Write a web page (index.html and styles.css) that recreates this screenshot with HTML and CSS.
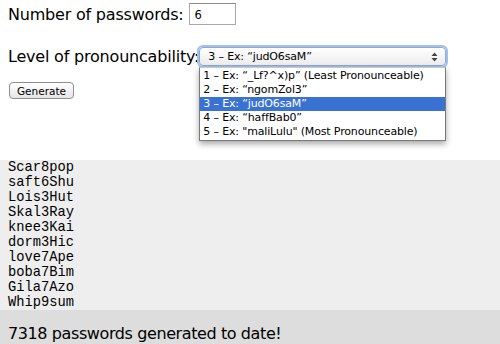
FILE: index.html
```html
<!DOCTYPE html>
<html>
<head>
<meta charset="utf-8">
<link rel="stylesheet" href="styles.css">
</head>
<body>
<div class="form">
  <div class="row r1">
    <span class="label">Number of passwords:</span>
    <span class="input">6</span>
  </div>
  <div class="row r2">
    <span class="label">Level of pronouncability:</span>
    <div class="select">
      <span class="sel-text">3 – Ex: “judO6saM”</span>
      <svg class="arrows" width="7" height="10" viewBox="0 0 7 10"><path d="M3.5 0.5 L6.5 4 H0.5 Z M3.5 9.5 L6.5 6 H0.5 Z" fill="#444"/></svg>
      <ul class="menu">
        <li>1 – Ex: “_Lf?^x)p” (Least Pronounceable)</li>
        <li>2 – Ex: “ngomZol3”</li>
        <li class="on">3 – Ex: “judO6saM”</li>
        <li>4 – Ex: “haffBab0”</li>
        <li>5 – Ex: "maliLulu" (Most Pronounceable)</li>
      </ul>
    </div>
  </div>
  <div class="row r3">
    <span class="btn">Generate</span>
  </div>
</div>
<pre class="list">Scar8pop
saft6Shu
Lois3Hut
Skal3Ray
knee3Kai
dorm3Hic
love7Ape
boba7Bim
Gila7Azo
Whip9sum</pre>
<div class="footer">7318 passwords generated to date!</div>
</body>
</html>
```
FILE: styles.css
```css
html, body {
  margin: 0;
  padding: 0;
  background: #ffffff;
}
body {
  font-family: "DejaVu Sans", "Liberation Sans", sans-serif;
  color: #000;
  width: 500px;
  height: 344px;
  overflow: hidden;
}
.form {
  padding: 3px 8px 0 8px;
}
.row {
  display: flex;
  align-items: center;
}
.label {
  font-size: 16px;
  letter-spacing: -0.2px;
}
.r1 {
  height: 22px;
}
.r1 .label {
  margin-right: 5px;
}
.input {
  box-sizing: border-box;
  width: 47px;
  height: 22px;
  border: 1px solid #a9a9a9;
  border-top-color: #8a8a8a;
  font-size: 11.5px;
  padding: 4px 0 0 5px;
  line-height: 14px;
}
.r2 {
  margin-top: 22px;
  height: 19px;
}
.select {
  position: relative;
  box-sizing: border-box;
  width: 247px;
  height: 19px;
  border: 1px solid #8fa8d0;
  border-radius: 4px;
  background: linear-gradient(#ffffff, #ececec);
  box-shadow: 0 0 0 2px #9fc0ef;
  display: flex;
  align-items: center;
  justify-content: space-between;
  padding: 0 7px 0 8px;
  font-size: 11px;
  letter-spacing: -0.15px;
}
.arrows {
  display: block;
}
.menu {
  position: absolute;
  left: -1px;
  top: 19px;
  width: 247px;
  box-sizing: border-box;
  margin: 0;
  padding: 1px 0;
  list-style: none;
  background: #fff;
  border: 1px solid #7a7a7a;
  border-top-color: #c8c8c8;
  box-shadow: 0 3px 6px rgba(0,0,0,0.35);
  z-index: 5;
}
.menu li {
  height: 14px;
  line-height: 14px;
  padding-left: 3px;
  font-size: 11px;
  letter-spacing: -0.15px;
  white-space: nowrap;
}
.menu li.on {
  background: #3a72d3;
  color: #fff;
}
.r3 {
  margin-top: 16px;
}
.btn {
  box-sizing: border-box;
  width: 65px;
  height: 17px;
  border: 1px solid #8e8e8e;
  border-radius: 4px;
  background: linear-gradient(#ffffff, #e6e6e6);
  font-size: 10.5px;
  display: flex;
  align-items: center;
  justify-content: center;
  margin-left: 1px;
}
.list {
  margin: 61px 0 0 0;
  padding: 0 8px;
  background: #eeeeee;
  font-family: "Liberation Mono", "DejaVu Sans Mono", monospace;
  font-size: 13.75px;
  line-height: 15px;
  height: 150px;
}
.footer {
  background: #dddddd;
  font-size: 16px;
  padding: 14px 8px 10px 8px;
  letter-spacing: -0.4px;
}
```
